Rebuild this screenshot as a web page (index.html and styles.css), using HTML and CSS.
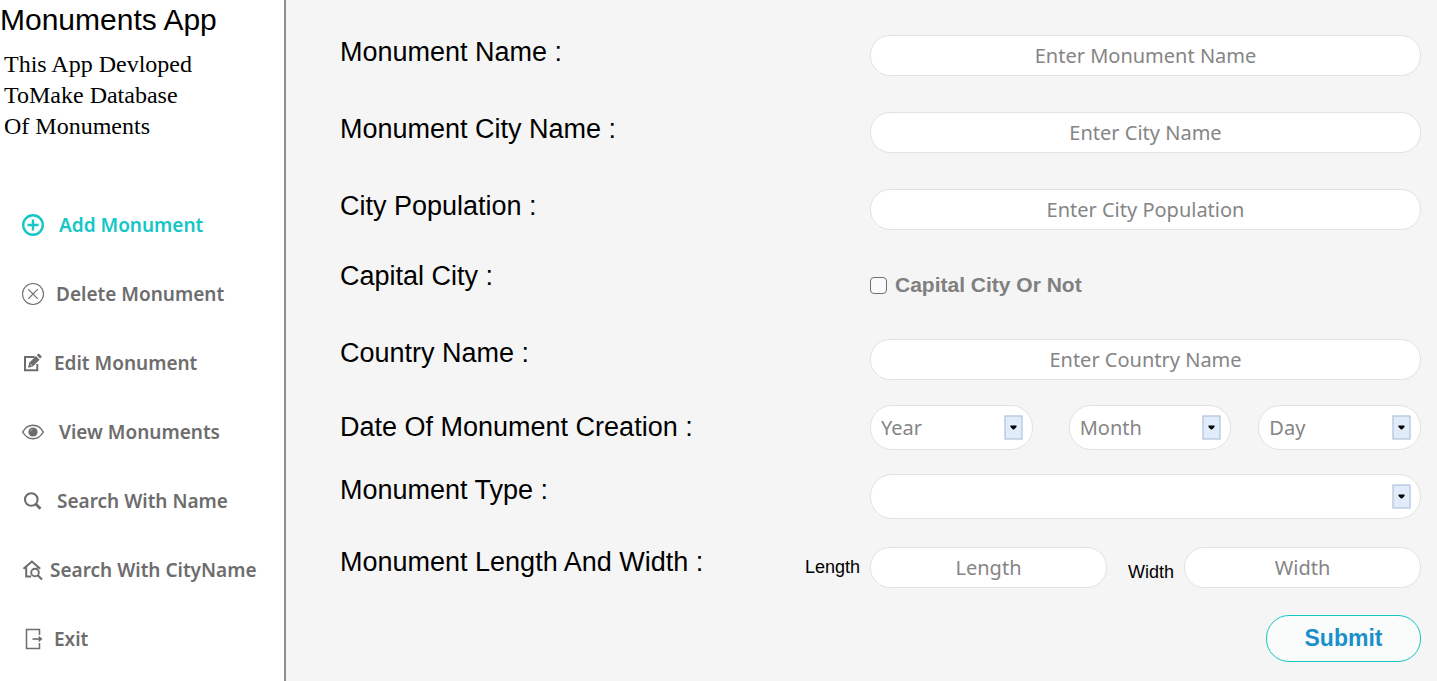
FILE: index.html
```html
<!DOCTYPE html>
<html lang="en">
<head>
<meta charset="utf-8">
<meta name="viewport" content="width=device-width, initial-scale=1">
<title>Monuments App</title>
<link rel="stylesheet" href="styles.css">
</head>
<body>
<div class="app">
  <aside class="sidebar">
    <h1 class="title">Monuments App</h1>
    <p class="about">This App Devloped<br>ToMake Database<br>Of Monuments</p>
    <nav class="nav">
      <a class="nav-item nav-item-wide active" href="#add">
        <svg class="icon" viewBox="0 0 22 22" fill="none" stroke="currentColor"><circle cx="11" cy="11" r="9.8" stroke-width="2.4"/><path d="M11 5.500v11M5.500 11h11" stroke-width="2.4"/></svg>
        Add Monument
      </a>
      <a class="nav-item" href="#delete">
        <svg class="icon" viewBox="0 0 22 22" fill="none" stroke="currentColor"><circle cx="11" cy="11" r="10.500" stroke-width="1.100"/><path d="M6.200 6.200l9.600 9.600M15.800 6.200l-9.600 9.600" stroke-width="1.200"/></svg>
        Delete Monument
      </a>
      <a class="nav-item" href="#edit">
        <svg class="icon icon-small" viewBox="0 0 20 22" fill="none" stroke="currentColor"><path d="M12.500 5H3v13.300h12.300V12" stroke-width="2"/><path d="M6 15.800l1.200-5 6.700-6.700 3.700 3.700-6.700 6.700z" fill="currentColor" stroke="none"/><path d="M8.200 12l2 2" stroke="#fff" stroke-width=".7"/><path d="M14.800 3.300l1.300-1.200q.6-.5 1.200 0l2 2q.5.600 0 1.200l-1.200 1.300z" fill="currentColor" stroke="none"/></svg>
        Edit Monument
      </a>
      <a class="nav-item nav-item-wide" href="#view">
        <svg class="icon" viewBox="0 0 22 22" fill="none" stroke="currentColor"><path d="M.700 11C3.200 6.600 7 4.300 11 4.300S18.800 6.600 21.300 11C18.800 15.400 15 17.700 11 17.700S3.200 15.400.700 11z" stroke-width="1.500"/><circle cx="11" cy="11" r="4.600" fill="currentColor" stroke="none"/><path d="M8.600 10.300q.3-1.700 2-2" stroke="#fff" stroke-width=".5"/></svg>
        View Monuments
      </a>
      <a class="nav-item nav-item-wide" href="#search-name">
        <svg class="icon icon-small" viewBox="0 0 20 22" fill="none" stroke="currentColor"><circle cx="9.300" cy="9.500" r="6.300" stroke-width="2.100"/><path d="M13.700 14l4.800 4.800" stroke-width="2.800"/></svg>
        Search With Name
      </a>
      <a class="nav-item nav-item-narrow" href="#search-city">
        <svg class="icon icon-small" viewBox="0 0 20 22" fill="none" stroke="currentColor"><path d="M1.500 9.800L9.900 2.500l8.300 7.300M4.200 8v9.500h5M15.700 7.500v2" stroke-width="2"/><circle cx="13" cy="13.500" r="3.800" stroke-width="1.900"/><path d="M15.700 16.200l4.300 4.300" stroke-width="2.200"/></svg>
        Search With CityName
      </a>
      <a class="nav-item" href="#exit">
        <svg class="icon icon-small" viewBox="0 0 20 22" fill="none" stroke="currentColor"><path d="M17.500 7V1.500H4.500v19h13V15" stroke-width="1.500"/><path d="M10.500 11h8" stroke-width="1.600"/><path d="M16.700 7.800l3.800 3.200-3.800 3.200z" fill="currentColor" stroke="none"/></svg>
        Exit
      </a>
    </nav>
  </aside>

  <main class="content">
    <form class="form">
      <div class="row row-tall">
        <label class="label" for="name">Monument Name :</label>
        <input class="field" id="name" type="text" placeholder="Enter Monument Name">
      </div>
      <div class="row row-tall">
        <label class="label" for="city">Monument City Name :</label>
        <input class="field" id="city" type="text" placeholder="Enter City Name">
      </div>
      <div class="row row-tall">
        <label class="label" for="population">City Population :</label>
        <input class="field" id="population" type="text" placeholder="Enter City Population">
      </div>
      <div class="row">
        <div class="label label-high">Capital City :</div>
        <label class="check"><input class="check-box" type="checkbox">Capital City Or Not</label>
      </div>
      <div class="row">
        <label class="label label-raised" for="country">Country Name :</label>
        <input class="field" id="country" type="text" placeholder="Enter Country Name">
      </div>
      <div class="row row-date">
        <div class="label label-level">Date Of Monument Creation :</div>
        <div class="dates">
          <span class="picker picker-year">
            <select class="select" aria-label="Year"><option>Year</option></select>
            <svg class="arrow" viewBox="0 0 19 25"><rect x="1" y="1" width="17" height="23" fill="#e0ecf9" stroke="#b5c7de" stroke-width="1.300"/><path d="M6.500 10.500h6v1.500l-2.500 2.500h-1l-2.500-2.500z"/></svg>
          </span>
          <span class="picker">
            <select class="select" aria-label="Month"><option>Month</option></select>
            <svg class="arrow" viewBox="0 0 19 25"><rect x="1" y="1" width="17" height="23" fill="#e0ecf9" stroke="#b5c7de" stroke-width="1.300"/><path d="M6.500 10.500h6v1.500l-2.500 2.500h-1l-2.500-2.500z"/></svg>
          </span>
          <span class="picker">
            <select class="select" aria-label="Day"><option>Day</option></select>
            <svg class="arrow" viewBox="0 0 19 25"><rect x="1" y="1" width="17" height="23" fill="#e0ecf9" stroke="#b5c7de" stroke-width="1.300"/><path d="M6.500 10.500h6v1.500l-2.500 2.500h-1l-2.500-2.500z"/></svg>
          </span>
        </div>
      </div>
      <div class="row">
        <label class="label label-raised" for="type">Monument Type :</label>
        <span class="picker">
          <select class="select" id="type"><option></option></select>
          <svg class="arrow" viewBox="0 0 19 25"><rect x="1" y="1" width="17" height="23" fill="#e0ecf9" stroke="#b5c7de" stroke-width="1.300"/><path d="M6.500 10.500h6v1.500l-2.500 2.500h-1l-2.500-2.500z"/></svg>
        </span>
      </div>
      <div class="row row-size">
        <div class="size-labels">
          <div class="label label-raised">Monument Length And Width :</div>
          <label class="small-label" for="length">Length</label>
        </div>
        <div class="sizes">
          <input class="field" id="length" type="text" placeholder="Length">
          <label class="small-label small-label-width" for="width">Width</label>
          <input class="field" id="width" type="text" placeholder="Width">
        </div>
      </div>
      <div class="actions">
        <button class="submit" type="submit">Submit</button>
      </div>
    </form>
  </main>
</div>
</body>
</html>
```
FILE: styles.css
```css
* {
  box-sizing: border-box;
}

body {
  margin: 0;
  background: #f5f5f5;
  color: #000;
  font-family: "Liberation Sans", Arial, sans-serif;
}

.app {
  display: flex;
  min-height: 100vh;
}

.sidebar {
  flex: 0 0 286px;
  background: #fff;
  border-right: 2px solid #8f8f8f;
}

.title {
  margin: 0;
  padding: 2px 0 0;
  font-size: 30px;
  font-weight: 400;
  line-height: 36px;
}

.about {
  margin: 11px 0 48px;
  padding-left: 4px;
  font-family: "Liberation Serif", "Times New Roman", serif;
  font-size: 24px;
  line-height: 31px;
}

.nav {
  display: flex;
  flex-direction: column;
  padding-left: 22px;
}

.nav-item {
  display: flex;
  align-items: center;
  gap: 12px;
  height: 69px;
  color: #6d6d6d;
  font-family: "Noto Sans", sans-serif;
  font-size: 19px;
  font-weight: 600;
  text-decoration: none;
  white-space: nowrap;
}

.nav-item-wide {
  gap: 15px;
}

.nav-item-narrow {
  gap: 8px;
}

.active {
  color: #14c6c6;
}

.icon {
  flex: none;
  width: 22px;
  height: 22px;
  overflow: visible;
}

.icon-small {
  width: 20px;
}

.content {
  flex: 1;
  min-width: 0;
  padding: 17px 16px 0 54px;
}

.row {
  display: grid;
  grid-template-columns: minmax(0, 530fr) minmax(0, 551fr);
  align-items: center;
  min-height: 74px;
}

.row-tall {
  min-height: 77px;
}

.row-date {
  min-height: 63px;
}

.row-size {
  min-height: 69px;
}

.label {
  padding-bottom: 8px;
  font-size: 27px;
  line-height: 32px;
}

.label-high {
  padding-bottom: 18px;
}

.label-raised {
  padding-bottom: 12px;
}

.label-level {
  padding-bottom: 2px;
}

.field,
.select {
  width: 100%;
  min-width: 0;
  margin: 0;
  border: 1px solid #e2e2e2;
  background: #fff;
  color: #858585;
  font-family: "Noto Sans", sans-serif;
  font-size: 20px;
}

.field {
  height: 41px;
  padding: 0 10px;
  border-radius: 20px;
  text-align: center;
}

.field::placeholder {
  color: #858585;
  opacity: 1;
}

.select {
  appearance: none;
  display: block;
  height: 45px;
  padding: 0 32px 0 10px;
  border-radius: 22px;
}

.check {
  display: flex;
  align-items: center;
  gap: 8px;
  color: #808080;
  font-size: 21px;
  font-weight: 700;
}

.check-box {
  appearance: none;
  width: 17px;
  height: 17px;
  margin: 0;
  border: 1px solid #707070;
  border-radius: 4px;
  background: #fafafa;
}

.check-box:checked {
  background: #14c6c6;
}

.dates {
  display: flex;
  gap: 27px;
}

.picker {
  position: relative;
  flex: 1;
  min-width: 0;
}

.picker-year {
  margin-right: 9px;
}

.arrow {
  position: absolute;
  top: 10px;
  right: 10px;
  width: 19px;
  height: 25px;
  pointer-events: none;
}

.size-labels {
  display: flex;
  align-items: center;
  justify-content: space-between;
  padding-right: 10px;
}

.sizes {
  display: flex;
  align-items: center;
}

.sizes .field {
  flex: 1;
}

.small-label {
  font-size: 18px;
}

.small-label-width {
  padding: 10px 10px 0 21px;
}

.actions {
  display: flex;
  justify-content: flex-end;
  padding-top: 13px;
}

.submit {
  width: 155px;
  height: 47px;
  border: 1px solid #14c6c6;
  border-radius: 23px;
  background: #fafcfc;
  color: #1b90ca;
  font-family: inherit;
  font-size: 23px;
  font-weight: 700;
}
```
